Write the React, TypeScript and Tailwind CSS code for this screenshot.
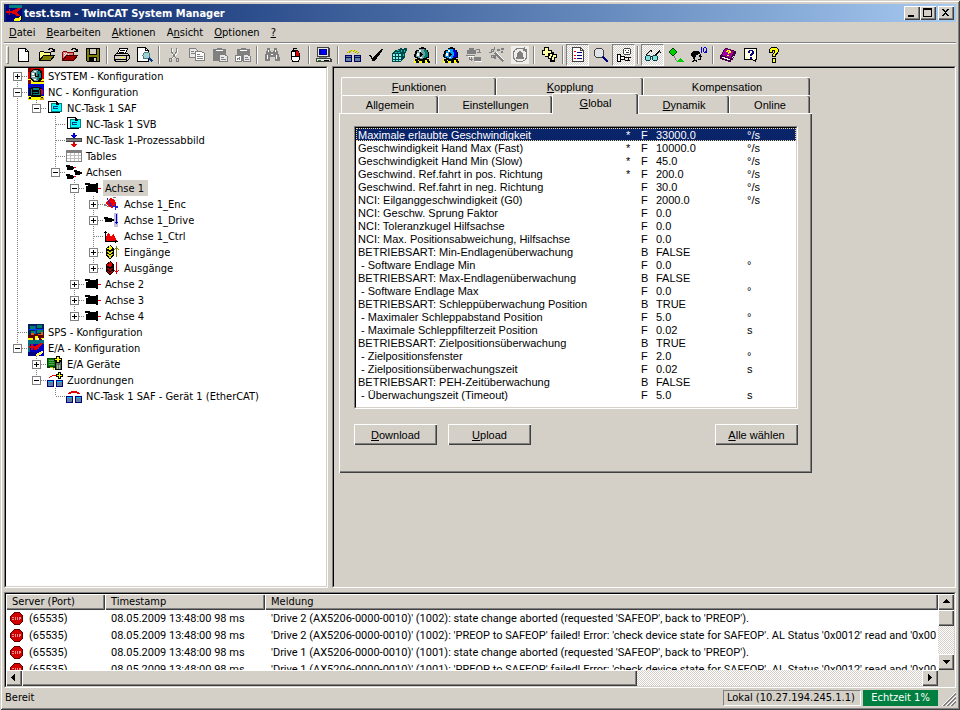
import { Fragment, ReactNode } from 'react';

const raised = 'bg-[#d4d0c8] shadow-[inset_1px_1px_#fff,inset_-1px_-1px_#404040,inset_-2px_-2px_#808080]';
const sunkenOuter = 'border border-t-[#808080] border-l-[#808080] border-r-white border-b-white';
const sunkenInner = 'border border-t-black border-l-black border-r-[#d4d0c8] border-b-[#d4d0c8]';
const checker = 'bg-[conic-gradient(#fff_25%,#d4d0c8_0_50%,#fff_0_75%,#d4d0c8_0)] bg-[length:2px_2px]';

/* ---------- Icons ---------- */

function Svg({ children, w = 16, h = 16 }: { children: ReactNode; w?: number; h?: number }) {
  return (
    <svg width={w} height={h} viewBox={`0 0 ${w} ${h}`} shapeRendering="crispEdges" fill="none" className="block shrink-0" aria-hidden="true">
      {children}
    </svg>
  );
}

const treeIcons: Record<string, ReactNode> = {
  system: (
    <Svg>
      <rect width="16" height="16" fill="#e00000" />
      <path d="M0 11h16v5H0z" fill="#ffff00" />
      <path d="M0 0h3v4H0zM0 12h3v4H0zM12 13h4v1h-4z" fill="#800000" />
      <path d="M5 1h6l3 3v7l-3 3H5l-3-3V4z" fill="#000" />
      <path d="M5 2h4l2 2v7l-2 2H6l-3-3V5z" fill="#7f9f9f" />
      <path d="M9 3h3v2h1v5h-2v2H9z" fill="#008080" />
      <path d="M4 5h2v2H4zM4 8h3v1H4zM6 3h2v1H6zM6 11h2v1H6z" fill="#fff" />
      <path d="M7 5h1v3h2v1H7zM10 6h1v3h-1z" fill="#000" />
    </Svg>
  ),
  nc: (
    <Svg>
      <rect width="16" height="16" fill="#0000e0" />
      <path d="M0 12h16v4H0z" fill="#ffff00" />
      <path d="M0 14h3v1H0zM12 14h4v2h-4z" fill="#d4a000" />
      <path d="M1 4h2V3h9v1h2v8h-1v1H3v-1H1z" fill="#000" />
      <path d="M5 4h6v2H5zM5 8h5v1H5zM5 10h6v1H5z" fill="#008080" />
      <path d="M3 5h1v6H3zM11 6h1v5h-1z" fill="#008080" />
      <path d="M5 1h7v1h1v2h-1V2H5z" fill="#000080" />
      <path d="M12 5h2v1h1v4h-1v1h-1V6h-1z" fill="#e00000" />
      <path d="M1 13h2v2H1zM13 13h2v1h-2z" fill="#000" />
    </Svg>
  ),
  task: (
    <Svg>
      <path d="M1.500 1.500h8l3 3v8h-11z" fill="#fff" stroke="#000" />
      <path d="M4 4h10v8H4z" fill="#00ffff" />
      <path d="M4.500 3.500h10v8h-10z" stroke="#008080" />
      <path d="M6 6.500h5M6 8.500h5M6.500 6v3" stroke="#004080" />
      <path d="M9 1h1v1h1v1h1v2H9z" fill="#000" />
    </Svg>
  ),
  image: (
    <Svg>
      <path d="M0 6h16v4H0z" fill="#404040" />
      <path d="M0 7h15v2H0z" fill="#808080" />
      <path d="M7 1h2v2h2v1h-1v1H9v1H7V5H6V4H5V3h2z" fill="#0000d0" />
      <path d="M7 10h2v2h2v1h-1v1H9v1H7v-1H6v-1H5v-1h2z" fill="#e00000" />
    </Svg>
  ),
  tables: (
    <Svg>
      <path d="M.5 2.500h15v11H.5z" fill="#fff" stroke="#808080" />
      <path d="M1 3h14v2H1z" fill="#808080" />
      <path d="M1 7.500h14M1 10.500h14M4.500 5v8M8.500 5v8M12.500 5v8" stroke="#c0c0c0" />
    </Svg>
  ),
  axes: (
    <Svg>
      <path d="M0 1h4v1h3v1h1v2H7v1H1V3H0zM8 6h3v1h3v1h2v2h-2v1H9V8H8zM0 10h4v1h3v1h1v2H7v1H1v-3H0z" fill="#000" />
      <path d="M8 3h2v1H8zM8 12h2v1H8z" fill="#e00000" />
    </Svg>
  ),
  axis: (
    <Svg>
      <path d="M0 3h5v1h6V3h2v10h-2v-1H1V6h2V5H0z" fill="#000" />
      <path d="M13 8h3v1h-3z" fill="#e00000" />
    </Svg>
  ),
  enc: (
    <Svg>
      <path d="M6 2h2v1h2v1h1v2h1v2h-1v2h-1v1H9v1H7v-1H5v-1H4V9H3V8H2V6h1V5h1V4h1V3h1z" fill="#f00000" />
      <path d="M0 8h2v1h1v1h2v1H3v-1H0zM9 1h3v1H9z" fill="#808080" />
      <path d="M3 2h1v2h1v2h1v1h1v2h1v1h3v1H8v-1H6V8H5V6H4V4H3zM11 8h1v2h2v2h-2v2h-1z" fill="#2020d0" />
    </Svg>
  ),
  drive: (
    <Svg>
      <path d="M0 5h4v1h4v1h2v2H8v1H1V7H0z" fill="#000" />
      <path d="M10 1h4v14h-4z" fill="#c0c0e0" />
      <path d="M12.500 2v10M11 10.500h3M12 11.500h1" stroke="#0000d0" />
    </Svg>
  ),
  ctrl: (
    <Svg>
      <path d="M2 14V8h1V6h1V5h1v1h1v2h2V7h1V6h1v2h1v2h1v2h1v2z" fill="#f00000" />
      <path d="M1.500 3v10.500H14M0 4.500h3M11.500 12v3" stroke="#000" />
    </Svg>
  ),
  inputs: (
    <Svg>
      <path d="M6 1h1v1h1v1h1v1h1v8H9v1H8v1H7v1H5v-1H4v-1H3v-1H2V4h1V3h1V2h2z" fill="#000" />
      <path d="M5 2h2v1h1v2H7v1H5V5H3V4h2z" fill="#ffff00" />
      <path d="M3 7h2v1h2V7h2v1H8v1H7v1H5V9H4V8H3zM3 10h2v1h2v-1h2v1H8v1H7v2H5v-2H4v-1H3z" fill="#e0e000" />
      <path d="M12.500 2v11M11 4.500h3M10 5.500h1M14 5.500h1" stroke="#808000" />
    </Svg>
  ),
  outputs: (
    <Svg>
      <path d="M6 1h1v1h1v1h1v1h1v8H9v1H8v1H7v1H5v-1H4v-1H3v-1H2V4h1V3h1V2h2z" fill="#000" />
      <path d="M5 2h2v1h1v3H7v1H5V6H3V4h2z" fill="#e00000" />
      <path d="M3 8h2v1h2V8h2v1H8v1H7v1H5v-1H4V9H3zM3 11h2v1h2v-1h2v1H8v1H7v1H5v-1H4v-1H3z" fill="#a00000" />
      <path d="M12.500 2v12M11 11.500h3M10 10.500h1M14 10.500h1" stroke="#e00000" />
    </Svg>
  ),
  sps: (
    <Svg>
      <rect width="16" height="14" fill="#002060" />
      <path d="M2 2h5v3H2zM9 1h5v3H9zM3 7h4v3H3zM9 6h6v3H9z" fill="#008060" />
      <path d="M1 5h14v1H1zM7 2h1v9H7z" fill="#0040ff" />
      <path d="M0 11h4v-1h7v1h5v3h-2v2h-3v-2H7v2H0z" fill="#600000" />
      <path d="M3 9h3v2H3zM10 10h3v1h-3zM13 8h2v3h-2z" fill="#e06000" />
      <path d="M0 14h5v2H0zM7 12h3v2H9v2H7zM13 14h3v1h-3z" fill="#ffff00" />
    </Svg>
  ),
  io: (
    <Svg>
      <rect width="16" height="16" fill="#0000c0" />
      <path d="M0 0h16v4H0zM0 4h2v9H0zM7 6h4v3H7z" fill="#007080" />
      <path d="M1 6h2V4h2v2h3V5h2V4h2V3h3v1h-1v1h-1v1h-1v1h-1v1h-1v1H9v1H6V8H5v2H3V8H1z" fill="#e00000" />
      <path d="M0 12h8v4H0z" fill="#000080" />
      <path d="M9 13h2v-1h2v-1h2v2h-1v1h-1v1h-2v1H8v-2h1z" fill="#ffff60" />
    </Svg>
  ),
  devices: (
    <Svg>
      <path d="M0 2h15v10H0z" fill="#004000" />
      <path d="M1 3h13v7H1z" fill="#008000" />
      <path d="M2 4h5v1H2zM2 6h5v1H2zM2 8h5v1H2z" fill="#60a060" />
      <path d="M6 12h1v2H6zM8 12h1v2H8zM3 11h3v1H3z" fill="#c0c000" />
      <path d="M8.500 5.500h6v8h-6z" fill="#607060" stroke="#000" />
      <path d="M10 9h1v4h-1zM12 9h1v4h-1z" fill="#a0c0a0" />
      <path d="M9 0h4v2h2v3h-2v2H9V5H7V2h2z" fill="#000" />
      <path d="M10 1h2v2h2v1h-2v2h-2V4H8V3h2z" fill="#ffff00" />
    </Svg>
  ),
  mappings: (
    <Svg>
      <path d="M2 5h1V4h2V3h4v1H5v1H3v1H2z" fill="#e00000" />
      <path d="M0 8h7v7H0zM9 8h7v7H9z" fill="#000080" />
      <path d="M1 9h5v1H1zM10 9h5v1h-5z" fill="#00c0ff" />
      <path d="M1 10h5v4H1zM10 10h5v4h-5z" fill="#6080a0" />
      <path d="M11 0h3v2h2v3h-2v2h-3V5H9V2h2z" fill="#000" />
      <path d="M12 1h1v2h2v1h-2v2h-1V4h-2V3h2z" fill="#ffff00" />
    </Svg>
  ),
  mapping: (
    <Svg>
      <path d="M2 5h1V4h2V3h6v1h2v1h1v1h-3V5H5v1H2z" fill="#e00000" />
      <path d="M0 8h7v7H0zM9 8h7v7H9z" fill="#000080" />
      <path d="M1 9h5v1H1zM10 9h5v1h-5z" fill="#00c0ff" />
      <path d="M1 10h5v4H1zM10 10h5v4h-5z" fill="#6080a0" />
    </Svg>
  ),
};

const gear = (light: string, dark: string) => (
  <Svg>
    <path d="M0 12h16v4H0z" fill="#ffff00" />
    <path d="M2 12h2v2h1v2H2v-2H1v-2zM8 14h3v2H8zM13 12h2v2h1v2h-2v-1h-1z" fill="#000" />
    <path d="M5 1h2V0h3v1h2v2h2v2h1v6h-2v2h-2v1H5v-1H3v-2H1v-1H0V7h1V4h1V3h3z" fill="#000" />
    <path d="M5 2h5v1h1v8H9v1H6v-1H4v-1H2V7h1V4h2z" fill={light} />
    <path d="M10 2h1v1h2v2h1v5h-2v1h-2V9h1V5h-1z" fill={dark} />
    <path d="M3 6h2v3H3zM5 3h2v2H5zM6 10h2v1H6z" fill="#fff" />
    <path d="M6 5h1v1h1v1h1v1H8v1H7v1H6z" fill="#000" />
  </Svg>
);

const tools: Record<string, ReactNode> = {
  new: (
    <Svg>
      <path d="M2.500 1.500h7l3 3v10h-10z" fill="#fff" stroke="#000" />
      <path d="M9.500 1.500v3h3" stroke="#000" />
    </Svg>
  ),
  open: (
    <Svg>
      <path d="M.5 13V5.500l1-1h3l1 1h6v3" fill="#ffff80" stroke="#000" />
      <path d="M.5 13.500l4-5h11l-4 5z" fill="#808000" stroke="#000" />
      <path d="M9 2.500h1v-1h3v1h1v2M12 4.500h4M15.500 2v3" stroke="#000" />
    </Svg>
  ),
  openRed: (
    <Svg>
      <path d="M.5 13V5.500l1-1h3l1 1h6v3" fill="#e08080" stroke="#800000" />
      <path d="M2 6h1v1H2zM4 6h1v1H4zM3 7h1v1H3zM6 7h1v1H6zM2 8h1v1H2z" fill="#fff" />
      <path d="M.5 13.500l4-5h11l-4 5z" fill="#a00000" stroke="#400000" />
      <path d="M9 2.500h1v-1h3v1h1v2M12 4.500h4M15.500 2v3" stroke="#000" />
    </Svg>
  ),
  save: (
    <Svg>
      <path d="M1.500 1.500h13v13h-12l-1-1z" fill="#808000" stroke="#000" />
      <path d="M4 1h8v7H4z" fill="#000" />
      <path d="M5 2h6v5H5z" fill="#d4d0c8" />
      <path d="M4 10h8v5H4z" fill="#000" />
      <path d="M9 11h2v3H9z" fill="#d4d0c8" />
    </Svg>
  ),
  print: (
    <Svg>
      <path d="M3.500 6.500l2-5h8l-2 5" fill="#fff" stroke="#000" />
      <path d="M6 3.500h5M5 5.500h5" stroke="#000" />
      <path d="M.5 8.500l2-2h11l2 2v3l-3 3H1.500l-1-2z" fill="#d4d0c8" stroke="#000" />
      <path d="M1 8.500h11.500v5M12.500 9.500l3-2M1 12.500h11" stroke="#000" />
      <path d="M7 10h3v1H7z" fill="#ffff00" />
    </Svg>
  ),
  preview: (
    <Svg>
      <path d="M.5.5h8l3 3v11H.5z" fill="#fff" stroke="#000" />
      <path d="M8.500.5v3h3" stroke="#000" />
      <circle cx="9.500" cy="8.500" r="3.500" fill="#a0d0d0" stroke="#408080" />
      <path d="M12 11l3.500 3.500" stroke="#004080" strokeWidth="2" />
    </Svg>
  ),
  cut: (
    <Svg>
      <path d="M6 2v4l2 3 3 3M11 2v4L9 9l-3 3" stroke="#fff" />
      <path d="M5.500 1v4l3 4 2 3M10.500 1v4l-3 4-2 3" stroke="#808080" />
      <path d="M3.500 11.500h2v3h-2zM10.500 11.500h2v3h-2z" stroke="#808080" />
    </Svg>
  ),
  copy: (
    <Svg>
      <path d="M.5 1.500h6l2 2v7h-8z" fill="#e8e8e8" stroke="#808080" />
      <path d="M6.500 4.500h6l3 2v7h-9z" fill="#fff" stroke="#808080" />
      <path d="M2 4.500h3M2 6.500h4M8 7.500h3M8 9.500h6M8 11.500h6" stroke="#808080" />
    </Svg>
  ),
  paste: (
    <Svg>
      <path d="M1 2h4V1h5v1h4v12H1z" fill="#808080" />
      <path d="M4 3h7v1H4z" fill="#fff" />
      <path d="M7.500 7.500h5l3 2v5h-8z" fill="#e8e8e8" stroke="#808080" />
      <path d="M9 10.500h3M9 12.500h5" stroke="#808080" />
    </Svg>
  ),
  pasteLink: (
    <Svg>
      <path d="M2 2h4V1h5v1h4v12H2z" fill="#808080" />
      <path d="M5 3h7v1H5z" fill="#fff" />
      <path d="M8.500 7.500h4l3 2v5h-7z" fill="#e8e8e8" stroke="#808080" />
      <path d="M.5 8.500h6v6h-6z" fill="#fff" stroke="#808080" />
      <path d="M2.500 13v-2h2M4.500 10v3M10 10.500h3M10 12.500h4" stroke="#808080" />
    </Svg>
  ),
  find: (
    <Svg>
      <path d="M3 1h3v3h1v1h2V4h1V1h3v3h1v3h1v3h1v4h-5v-4H6v4H1v-4h0V7h1V4h1z" fill="#808080" />
      <path d="M3 8h1v4H3zM12 8h1v4h-1zM4 3h1v2H4zM11 3h1v2h-1zM7 7h2v1H7z" fill="#fff" />
    </Svg>
  ),
  mouse: (
    <Svg>
      <path d="M6.500 4V1.500h3" stroke="#000" />
      <path d="M5 3h6v1h1v2h1v7h-1v2H5v-2H4V6h0V4h1z" fill="#000" />
      <path d="M5 5h3v4H5zM5 10h7v3h-1v1H6v-1H5z" fill="#fff" />
      <path d="M9 4h2v1h1v4H9z" fill="#e00000" />
    </Svg>
  ),
  pc: (
    <Svg>
      <path d="M1.500.5h11v9h-11z" fill="#e8e8e8" stroke="#404040" />
      <path d="M12 1h2v9h-2zM15 12h1v3h-1z" fill="#404040" />
      <path d="M3 2h8v6H3z" fill="#000080" />
      <path d="M5 3h5v4H5z" fill="#0000ff" />
      <path d="M.5 11.500h14v3H.5z" fill="#e8e8e8" stroke="#404040" />
      <path d="M3 10h8v1H3z" fill="#808080" />
      <path d="M2 13.500h3" stroke="#008000" />
      <path d="M8 13.500h5" stroke="#000" />
    </Svg>
  ),
  links: (
    <Svg>
      <path d="M2 5h1V4h2V3h6v1h2v1h1v1h-2V5h-2V4H5v1H4v1H2z" fill="#e8e800" stroke="#a0a000" strokeWidth="1" strokeDasharray="1 2" />
      <path d="M0 8h7v7H0zM9 8h7v7H9z" fill="#000060" />
      <path d="M1 9h5v1H1zM10 9h5v1h-5zM1 11h5v3H1zM10 11h5v3h-5z" fill="#6080a0" />
    </Svg>
  ),
  check: (
    <Svg>
      <path d="M1 8h2v1h1v2h1v-1h1V9h1V8h1V7h1V6h1V5h1V4h1V3h1V2h2v1h-1v2h-1v1h-1v2h-1v1h-1v1H9v2H8v1H7v1H4v-2H3v-2H2V9H1z" fill="#000" />
    </Svg>
  ),
  cubes: (
    <Svg>
      <path d="M1 6h1V5h1V4h1V3h3V2h2V1h2v1h2V1h3v3h-1v2h-1v5h-1v1h-1v1h-1v1h-1v1H1z" fill="#004848" />
      <path d="M2 7h2v2H2zM5 7h2v2H5zM8 7h2v2H8zM2 10h2v2H2zM5 10h2v2H5zM8 10h2v2H8zM2 13h2v1H2zM5 13h2v1H5zM8 13h2v1H8z" fill="#80f0f0" />
      <path d="M4 5h2v1H4zM7 5h2v1H7zM6 3h2v1H6zM10 3h1v2h-1zM13 3h1v2h-1zM12 7h1v2h-1z" fill="#00c0c0" />
    </Svg>
  ),
  gearGreen: gear('#70a0a0', '#008070'),
  gearBlue: gear('#00a0ff', '#0000e0'),
  restart: (
    <Svg>
      <path d="M1 3h2V1h5v2h2v4H1zM8 10h7v4H8zM0 8h9v1H0z" fill="#808080" />
      <path d="M10 2.500h3v3M11 5.500h4M3.500 9v3.500h3M5.500 10v4" stroke="#808080" />
      <path d="M2 9.500h6M9 14.500h7" stroke="#fff" />
    </Svg>
  ),
  wand: (
    <Svg>
      <path d="M7 6l8 8" stroke="#fff" strokeWidth="2" />
      <path d="M6 6l8.500 8.500" stroke="#808080" strokeWidth="2" />
      <path d="M5.500 0v3M0 5.500h3M2 2h2v2H2zM8 2h2v1H8zM2 8h2v2H2zM5 8h1v3H5zM12 1h2v1h-2zM12 4h1v1h-1z" stroke="#808080" />
    </Svg>
  ),
  reload: (
    <Svg w={18} h={18}>
      <rect width="18" height="18" fill="#f0eeea" />
      <circle cx="9" cy="9" r="7" stroke="#808080" />
      <path d="M5 13v-2h1V7h1V6h1V5h2v1h1v1h1v4h1v2zM13 1h1v2h2v2h-4V4h1z" fill="#808080" />
    </Svg>
  ),
  plus: (
    <Svg>
      <path d="M3 0h5v3h3v2h2v2h3v4h-2v4h-5v-3H7v-2H4V8H1V3h2z" fill="#000" />
      <path d="M4 1h3v3h3v2H7v3H4V7H2V4h2z" fill="#ffffa0" />
      <path d="M9 7h2v2h-1v2H8V9h1zM12 8h3v2h-2v3h-2v-3h1z" fill="#ffffa0" />
    </Svg>
  ),
  props: (
    <Svg>
      <path d="M2.500.5h8l3 3v11h-11z" fill="#fff" stroke="#404040" />
      <path d="M10.500.5v3h3" stroke="#404040" />
      <path d="M4 4.500h2M4 8.500h2M4 11.500h2" stroke="#e00000" />
      <path d="M7 5.500h5M7 8.500h5M7 11.500h5" stroke="#000080" />
    </Svg>
  ),
  zoom: (
    <Svg>
      <circle cx="6" cy="6" r="5" fill="#e0e4e8" stroke="#404040" />
      <path d="M10 10l5 5" stroke="#000080" strokeWidth="2" />
    </Svg>
  ),
  monitor: (
    <Svg>
      <path d="M8 1h6v1h1v5h-1v1H8V7H7V2h1z" fill="#404040" />
      <path d="M8 2h6v5H8z" fill="#fff" />
      <path d="M9 3h1v1H9zM12 3h1v1h-1zM10 5h3v1h-3z" fill="#404040" />
      <path d="M1.500 7.500h3v7h-3zM4.500 9.500h4v3h-4z" fill="#fff" stroke="#000" />
      <path d="M8 10.500h7M12.500 10v3M9 13.500h5" stroke="#000" />
    </Svg>
  ),
  glasses: (
    <Svg>
      <path d="M1 8h4v1h1v4H5v1H1v-1H0V9h1zM8 8h4v1h1v4h-1v1H8v-1H7V9h1z" fill="#004040" />
      <path d="M1 9h4v4H1zM8 9h4v4H8z" fill="#80e0e0" />
      <path d="M1 7h1V6h1V5h1V4h1V3h2v2H6V4H5v1H4v1H3v1H2v1H1zM10 7h1V6h1V5h1V4h1V3h1v2h1v1h-1V5h-1v1h-1v1h-1v1h-2zM6 9h1v1H6z" fill="#000" />
    </Svg>
  ),
  diamond: (
    <Svg>
      <path d="M4 1h2v1h1v1h1v1h1v2H8v1H7v1H6v1H4V8H3V7H2V6H1V4h1V3h1V2h1z" fill="#004000" />
      <path d="M4 2h2v1h1v1h1v2H7v1H6v1H4V7H3V6H2V4h1V3h1z" fill="#00d000" />
      <path d="M6 9h1v2H6zM7 11h1v2H7zM8 13h1v1H8z" fill="#808080" />
      <path d="M9 15v-1h1v-1h1v-1h1v-1h1v1h1v1h1v1h1v1z" fill="#00d000" />
    </Svg>
  ),
  iq: (
    <Svg>
      <path d="M2 4h6v1h1v2H7v1H5v2H4v2H2v-2H1V9H0V6h1V5h1z" fill="#000" />
      <path d="M9 7h1v2h1v1h-1v3H7v-1h2v-2H8V8h1zM3 12h1v1h2v2H5v-1H3v1H1v-1h1v-1h1z" fill="#000" />
      <path d="M5 8h3v2h1v2H6v1H4v-3h1z" fill="#c8c8c8" />
      <path d="M10 0h1v6h-1zM12 1h1v4h-1zM13 0h2v1h-2zM15 1h1v5h-1zM13 5h2v1h-2zM14 4h1v1h-1z" fill="#0000d0" />
    </Svg>
  ),
  book: (
    <Svg>
      <path d="M5 1h3v1h3v1h3v1h2v3h-1v2h-1v2h-1v2h-2v2H8v-1H5v-1H2v-1H0V8h1V7h1V5h1V3h1V2h1z" fill="#400040" />
      <path d="M5 2h3v1h3v1h3v1h-1v2h-1v2h-1v2H9v-1H6V9H3V8H2V7h1V5h1V3h1z" fill="#a000a0" />
      <path d="M2 10h3v1h3v1h2v1H7v-1H4v-1H2zM13 9h1v1h-1v1h-1v-1h1z" fill="#fff" />
      <path d="M6 4h1V3h3v1h1v2H9v1H8V5h1V4H8v1H6zM7 8h2v1H7z" fill="#ffff00" />
    </Svg>
  ),
  helpTopics: (
    <Svg>
      <path d="M1.500 1.500h12v11h-1v2l-3-2h-8z" fill="#ffffe0" stroke="#000" />
      <path d="M5 4h1V3h4v1h1v3h-1v1H9v1H7V7h1V6h1V4H7v2H5zM7 10h2v2H7z" fill="#000080" />
    </Svg>
  ),
  help: (
    <Svg>
      <path d="M4 1h1V0h6v1h1v1h1v3h-1v2h-1v1h-1v2H6V7h1V6h1V4H7v2H3V2h1zM6 11h4v5H6z" fill="#000" />
      <path d="M5 1h6v1h1v3h-1v1h-1v1H9v2H7V7h1V6h1V3H6v2H4V2h1zM7 12h2v3H7z" fill="#ffff00" />
    </Svg>
  ),
};

/* ---------- Title, menu and toolbar ---------- */

function Hot({ text, at }: { text: string; at?: number }) {
  if (at === undefined) return <>{text}</>;
  return (
    <>
      {text.slice(0, at)}
      <span className="underline underline-offset-1">{text[at]}</span>
      {text.slice(at + 1)}
    </>
  );
}

function TitleBar() {
  return (
    <header className="flex h-[18px] shrink-0 items-center bg-gradient-to-r from-[#0a246a] to-[#a6caf0] px-[2px]">
      <Svg>
        <rect width="16" height="16" fill="#000080" />
        <path d="M3 0h13v3H3z" fill="#008080" />
        <path d="M0 6h3V4h1v2h3V5h2V4h2V3h4v1h-1v1h-1v1h-1v1h-1v1h1v1h1v1h1v1h-4v-1H9V9H6V8H4v2H3V8H0z" fill="#e00000" />
        <path d="M9 13h3l3-2v3l-2 2H8z" fill="#ffff00" />
      </Svg>
      <h1 className="ml-[2px] flex-1 whitespace-nowrap pt-px font-bold text-white">test.tsm - TwinCAT System Manager</h1>
      <button aria-label="Minimieren" className={`h-[14px] w-4 ${raised}`}>
        <Svg h={14}><path d="M4 9h6v2H4z" fill="#000" /></Svg>
      </button>
      <button aria-label="Maximieren" className={`h-[14px] w-4 ${raised}`}>
        <Svg h={14}><path d="M3.500 2.500h8v8h-8zM3 3.500h9" stroke="#000" /></Svg>
      </button>
      <button aria-label="Schließen" className={`ml-[2px] h-[14px] w-4 ${raised}`}>
        <Svg h={14}><path d="M4 3h2v1h1v1h1V4h1V3h2v1h-1v1H9v1H8v1h1v1h1v1h1v1H9V9H8V8H7v1H6v1H4V9h1V8h1V7h1V6H6V5H5V4H4z" fill="#000" /></Svg>
      </button>
    </header>
  );
}

const menus = [
  { label: 'Datei', hot: 0 },
  { label: 'Bearbeiten', hot: 0 },
  { label: 'Aktionen', hot: 0 },
  { label: 'Ansicht', hot: 1 },
  { label: 'Optionen', hot: 0 },
  { label: '?', hot: 0 },
];

// groups are divided by an etched line
const toolGroups: { id: string; label: string; pressed?: boolean }[][] = [
  [{ id: 'new', label: 'Neu' }, { id: 'open', label: 'Öffnen' }, { id: 'openRed', label: 'Vom Ziel öffnen' }, { id: 'save', label: 'Speichern' }],
  [{ id: 'print', label: 'Drucken' }, { id: 'preview', label: 'Seitenansicht' }],
  [{ id: 'cut', label: 'Ausschneiden' }, { id: 'copy', label: 'Kopieren' }, { id: 'paste', label: 'Einfügen' }, { id: 'pasteLink', label: 'Mit Verknüpfung einfügen' }],
  [{ id: 'find', label: 'Suchen' }, { id: 'mouse', label: 'Gerätesuche' }],
  [{ id: 'pc', label: 'Zielsystem' }],
  [{ id: 'links', label: 'Mappings erzeugen' }, { id: 'check', label: 'Prüfen' }, { id: 'cubes', label: 'Aktivieren' }, { id: 'gearGreen', label: 'Run-Modus' }],
  [{ id: 'gearBlue', label: 'Config-Modus' }, { id: 'restart', label: 'Geräte neu laden' }, { id: 'wand', label: 'Scannen' }, { id: 'reload', label: 'Free Run' }],
  [{ id: 'plus', label: 'Hinzufügen' }],
  [{ id: 'props', label: 'Eigenschaften', pressed: true }, { id: 'zoom', label: 'Vergrößern' }, { id: 'monitor', label: 'Beobachten', pressed: true }],
  [{ id: 'glasses', label: 'Online-Werte', pressed: true }, { id: 'diamond', label: 'Variablen' }, { id: 'iq', label: 'Assistent' }],
  [{ id: 'book', label: 'Handbuch' }, { id: 'helpTopics', label: 'Hilfethemen' }, { id: 'help', label: 'Hilfe' }],
];

function Toolbar() {
  return (
    <div role="toolbar" className="flex h-[24px] shrink-0 items-center border-t border-[#808080] shadow-[inset_0_1px_#fff]">
      <div className="mr-[3px] ml-[2px] h-[18px] w-[3px] border border-white border-r-[#808080] border-b-[#808080]"></div>
      {toolGroups.map((group, i) => (
        <Fragment key={i}>
          {i > 0 && <div className="mx-[2px] h-[18px] w-[2px] border-l border-[#808080] bg-white"></div>}
          {group.map((tool) => (
            <button
              key={tool.id}
              aria-label={tool.label}
              className={`flex h-[22px] w-[23px] items-center justify-center ${
                tool.pressed ? `border border-[#808080] border-r-white border-b-white ${checker}` : ''
              }`}
            >
              {tools[tool.id]}
            </button>
          ))}
        </Fragment>
      ))}
    </div>
  );
}

/* ---------- Tree ---------- */

interface TreeNode {
  label: string;
  icon: string;
  expandable?: boolean;
  selected?: boolean;
  children?: TreeNode[];
}

const tree: TreeNode[] = [
  { label: 'SYSTEM - Konfiguration', icon: 'system', expandable: true },
  {
    label: 'NC - Konfiguration',
    icon: 'nc',
    children: [
      {
        label: 'NC-Task 1 SAF',
        icon: 'task',
        children: [
          { label: 'NC-Task 1 SVB', icon: 'task' },
          { label: 'NC-Task 1-Prozessabbild', icon: 'image' },
          { label: 'Tables', icon: 'tables' },
          {
            label: 'Achsen',
            icon: 'axes',
            children: [
              {
                label: 'Achse 1',
                icon: 'axis',
                selected: true,
                children: [
                  { label: 'Achse 1_Enc', icon: 'enc', expandable: true },
                  { label: 'Achse 1_Drive', icon: 'drive', expandable: true },
                  { label: 'Achse 1_Ctrl', icon: 'ctrl' },
                  { label: 'Eingänge', icon: 'inputs', expandable: true },
                  { label: 'Ausgänge', icon: 'outputs', expandable: true },
                ],
              },
              { label: 'Achse 2', icon: 'axis', expandable: true },
              { label: 'Achse 3', icon: 'axis', expandable: true },
              { label: 'Achse 4', icon: 'axis', expandable: true },
            ],
          },
        ],
      },
    ],
  },
  { label: 'SPS - Konfiguration', icon: 'sps' },
  {
    label: 'E/A - Konfiguration',
    icon: 'io',
    children: [
      { label: 'E/A Geräte', icon: 'devices', expandable: true },
      {
        label: 'Zuordnungen',
        icon: 'mappings',
        children: [{ label: 'NC-Task 1 SAF - Gerät 1 (EtherCAT)', icon: 'mapping' }],
      },
    ],
  },
];

function Branches({ nodes, trail }: { nodes: TreeNode[]; trail: boolean[] }) {
  return (
    <ul role={trail.length ? 'group' : 'tree'}>
      {nodes.map((node, i) => {
        const last = i === nodes.length - 1;
        const top = trail.length === 0 && i === 0 ? 8 : 0;
        const boxed = node.expandable || node.children;

        return (
          <li key={node.label} role="treeitem" aria-selected={!!node.selected}>
            <div className="flex h-4 items-center">
              {trail.map((line, n) => (
                <Svg key={n} w={19}>
                  {line && <path d="M9.500 0v16" stroke="#808080" strokeDasharray="1 1" />}
                </Svg>
              ))}
              <Svg w={19}>
                <path d={`M9.500 ${top}V${last ? 8 : 16}M10 8.500h9`} stroke="#808080" strokeDasharray="1 1" />
                {boxed && <path d="M5.500 4.500h8v8h-8z" fill="#fff" stroke="#808080" />}
                {boxed && <path d={node.children ? 'M7 8.500h5' : 'M7 8.500h5M9.500 6v5'} stroke="#000" />}
              </Svg>
              <div className="ml-px">{treeIcons[node.icon]}</div>
              <span className={`ml-[2px] h-4 whitespace-nowrap pl-[2px] leading-[18px] ${node.selected ? 'bg-[#d4d0c8] pr-1' : ''}`}>
                {node.label}
              </span>
            </div>
            {node.children && <Branches nodes={node.children} trail={[...trail, !last]} />}
          </li>
        );
      })}
    </ul>
  );
}

/* ---------- Parameter page ---------- */

const tabsBack = [
  { label: 'Funktionen', hot: 0, width: 'w-[155px]' },
  { label: 'Kopplung', hot: 0, width: 'w-[147px]' },
  { label: 'Kompensation', width: 'w-[167px]' },
];

const tabsFront = [
  { label: 'Allgemein', width: 'w-[97px]' },
  { label: 'Einstellungen', width: 'w-[114px]' },
  { label: 'Global', hot: 0, width: 'w-[86px]', active: true },
  { label: 'Dynamik', hot: 0, width: 'w-[91px]' },
  { label: 'Online', width: 'w-[81px]' },
];

const params = [
  ['Maximale erlaubte Geschwindigkeit', '*', 'F', '33000.0', '°/s'],
  ['Geschwindigkeit Hand Max (Fast)', '*', 'F', '10000.0', '°/s'],
  ['Geschwindigkeit Hand Min (Slow)', '*', 'F', '45.0', '°/s'],
  ['Geschwind. Ref.fahrt in pos. Richtung', '*', 'F', '200.0', '°/s'],
  ['Geschwind. Ref.fahrt in neg. Richtung', '', 'F', '30.0', '°/s'],
  ['NCI: Eilganggeschwindigkeit (G0)', '', 'F', '2000.0', '°/s'],
  ['NCI: Geschw. Sprung Faktor', '', 'F', '0.0', ''],
  ['NCI: Toleranzkugel Hilfsachse', '', 'F', '0.0', ''],
  ['NCI: Max. Positionsabweichung, Hilfsachse', '', 'F', '0.0', ''],
  ['BETRIEBSART: Min-Endlagenüberwachung', '', 'B', 'FALSE', ''],
  [' - Software Endlage Min', '', 'F', '0.0', '°'],
  ['BETRIEBSART: Max-Endlagenüberwachung', '', 'B', 'FALSE', ''],
  [' - Software Endlage Max', '', 'F', '0.0', '°'],
  ['BETRIEBSART: Schleppüberwachung Position', '', 'B', 'TRUE', ''],
  [' - Maximaler Schleppabstand Position', '', 'F', '5.0', '°'],
  [' - Maximale Schleppfilterzeit Position', '', 'F', '0.02', 's'],
  ['BETRIEBSART: Zielpositionsüberwachung', '', 'B', 'TRUE', ''],
  [' - Zielpositionsfenster', '', 'F', '2.0', '°'],
  [' - Zielpositionsüberwachungszeit', '', 'F', '0.02', 's'],
  ['BETRIEBSART: PEH-Zeitüberwachung', '', 'B', 'FALSE', ''],
  [' - Überwachungszeit (Timeout)', '', 'F', '5.0', 's'],
];

function Tab({ label, hot, width, active }: { label: string; hot?: number; width: string; active?: boolean }) {
  return (
    <button
      role="tab"
      aria-selected={!!active}
      className={`rounded-t-[2px] border-t border-l border-white bg-[#d4d0c8] shadow-[inset_-1px_0_#404040,inset_-2px_0_#808080] ${width} ${
        active ? 'z-10 -mt-[2px] -mb-px h-[21px] pb-[2px]' : 'h-[18px]'
      }`}
    >
      <Hot text={label} at={hot} />
    </button>
  );
}

function PushButton({ label }: { label: string }) {
  return (
    <button className={`h-[21px] w-[83px] ${raised}`}>
      <Hot text={label} at={0} />
    </button>
  );
}

function ParameterPage() {
  return (
    <div className="w-[473px] font-['Liberation_Sans',Arial,sans-serif]">
      <div role="tablist" className="px-[2px]">
        <div className="flex">
          {tabsBack.map((tab) => <Tab key={tab.label} {...tab} />)}
        </div>
        <div className="flex">
          {tabsFront.map((tab) => <Tab key={tab.label} {...tab} />)}
        </div>
      </div>
      <div className="border-t border-l border-white shadow-[inset_-1px_-1px_#404040,inset_-2px_-2px_#808080]">
        <div className="pt-3 pr-[14px] pb-7 pl-[14px]">
          <div className={sunkenOuter}>
            <div className={`h-[281px] bg-white ${sunkenInner}`}>
              <table className="w-full table-fixed border-collapse">
                <colgroup>
                  <col className="w-[268px]" />
                  <col className="w-[15px]" />
                  <col className="w-[15px]" />
                  <col className="w-[91px]" />
                  <col />
                </colgroup>
                <tbody>
                  {params.map((row, i) => (
                    <tr key={row[0]} className={i === 0 ? 'bg-[#0a246a] text-white outline-1 -outline-offset-1 outline-dotted outline-[#f5db95]' : ''}>
                      {row.map((cell, c) => (
                        <td key={c} className="h-[13px] whitespace-pre p-0 pt-px pl-[2px] leading-[12px]">{cell}</td>
                      ))}
                    </tr>
                  ))}
                </tbody>
              </table>
            </div>
          </div>
          <div className="mt-[15px] flex gap-[11px]">
            <PushButton label="Download" />
            <PushButton label="Upload" />
            <div className="flex-1"></div>
            <PushButton label="Alle wählen" />
          </div>
        </div>
      </div>
    </div>
  );
}

/* ---------- Message log ---------- */

const messages = [
  "'Drive 2 (AX5206-0000-0010)' (1002): state change aborted (requested 'SAFEOP', back to 'PREOP').",
  "'Drive 2 (AX5206-0000-0010)' (1002): 'PREOP to SAFEOP' failed! Error: 'check device state for SAFEOP'. AL Status '0x0012' read and '0x00",
  "'Drive 1 (AX5206-0000-0010)' (1001): state change aborted (requested 'SAFEOP', back to 'PREOP').",
  "'Drive 1 (AX5206-0000-0010)' (1001): 'PREOP to SAFEOP' failed! Error: 'check device state for SAFEOP'. AL Status '0x0012' read and '0x00",
];

function StopIcon() {
  return (
    <Svg w={13} h={13}>
      <path d="M4 0h5l4 4v5l-4 4H4L0 9V4z" fill="#600000" />
      <path d="M4 1h5l3 3v5l-3 3H4L1 9V4z" fill="#d00000" />
      <path d="M2 5h2v1H2zM3 7h1v1H2V7h1zM5 5h1v3H5zM7 5h1v3H7zM9 5h2v2h-1v1H9z" fill="#f09090" />
    </Svg>
  );
}

function ArrowButton({ label, d }: { label: string; d: string }) {
  return (
    <button aria-label={label} className={`h-4 w-4 shrink-0 ${raised}`}>
      <Svg><path d={d} fill="#000" /></Svg>
    </button>
  );
}

function MessageLog() {
  return (
    <section className={`h-24 shrink-0 font-[Roboto,Tahoma,sans-serif] ${sunkenOuter}`}>
      <div className={`flex h-full flex-col bg-white ${sunkenInner}`}>
        <div className="flex min-h-0 flex-1">
          <div className="min-w-0 flex-1 overflow-hidden">
            <table className="w-full table-fixed border-collapse">
              <colgroup>
                <col className="w-[99px]" />
                <col className="w-[160px]" />
                <col />
              </colgroup>
              <thead>
                <tr>
                  {['Server (Port)', 'Timestamp', 'Meldung'].map((title) => (
                    <th key={title} className={`h-4 p-0 pl-[6px] text-left font-['DejaVu_Sans_Condensed',Tahoma,sans-serif] font-normal leading-4 ${raised}`}>{title}</th>
                  ))}
                </tr>
              </thead>
              <tbody>
                {messages.map((message, i) => (
                  <tr key={i}>
                    <td className="h-[17px] p-0 pl-1 leading-[17px]">
                      <div className="flex items-center gap-[6px]">
                        <StopIcon />
                        (65535)
                      </div>
                    </td>
                    <td className="p-0 pl-[6px] leading-[17px]">08.05.2009 13:48:00 98 ms</td>
                    <td className="overflow-hidden p-0 pl-[6px] leading-[17px] whitespace-nowrap">{message}</td>
                  </tr>
                ))}
              </tbody>
            </table>
          </div>
          <div className={`flex w-4 flex-col ${checker}`}>
            <ArrowButton label="Nach oben" d="M8 5h1v1h1v1h1v1h1v1H5V8h1V7h1V6h1z" />
            <div className={`h-4 ${raised}`}></div>
            <div className="flex-1"></div>
            <ArrowButton label="Nach unten" d="M5 6h7v1h-1v1h-1v1H9v1H8V9H7V8H6V7H5z" />
          </div>
        </div>
        <div className="flex h-4 shrink-0 bg-[#d4d0c8]">
          <div className={`flex flex-1 ${checker}`}>
            <ArrowButton label="Nach links" d="M9 4v7H8v-1H7V9H6V8H5V7h1V6h1V5h1V4z" />
            <div className={`w-[66%] ${raised}`}></div>
            <div className="flex-1"></div>
            <ArrowButton label="Nach rechts" d="M6 4h1v1h1v1h1v1h1v1H9v1H8v1H7v1H6z" />
          </div>
          <div className="w-4"></div>
        </div>
      </div>
    </section>
  );
}

function StatusBar() {
  return (
    <footer className="flex h-[18px] shrink-0 items-end">
      <p className="h-4 flex-1 pl-px leading-4">Bereit</p>
      <p className="h-4 w-[138px] border border-[#808080] border-r-white border-b-white pl-[3px] leading-[14px] whitespace-nowrap">Lokal (10.27.194.245.1.1)</p>
      <p className="ml-[2px] h-4 w-[75px] bg-[#008040] text-center leading-4 text-white">Echtzeit 1%</p>
      <div className="ml-[4px]">
        <Svg w={14} h={14}>
          <path d="M1 14L14 1M5 14l9-9M9 14l5-5" stroke="#808080" strokeWidth="2" />
          <path d="M0 14L14 0M4 14L14 4M8 14l6-6" stroke="#fff" />
        </Svg>
      </div>
    </footer>
  );
}

export default function App() {
  return (
    <div className="flex h-screen flex-col overflow-hidden bg-[#d4d0c8] p-1 font-['DejaVu_Sans_Condensed',Tahoma,sans-serif] text-[11px] leading-[14px] text-black shadow-[inset_1px_1px_#d4d0c8,inset_-1px_-1px_#404040,inset_2px_2px_#fff,inset_-2px_-2px_#808080]">
      <TitleBar />

      <nav className="flex h-5 shrink-0 items-center gap-[11px] pt-[2px] pl-[5px]">
        {menus.map((menu) => (
          <button key={menu.label}>
            <Hot text={menu.label} at={menu.hot} />
          </button>
        ))}
      </nav>

      <Toolbar />

      <main className="flex min-h-0 flex-1 gap-1">
        <aside className={`w-[324px] shrink-0 ${sunkenOuter}`}>
          <div className={`h-full overflow-hidden bg-white pl-[2px] ${sunkenInner}`}>
            <Branches nodes={tree} trail={[]} />
          </div>
        </aside>
        <section className={`min-w-0 flex-1 ${sunkenOuter}`}>
          <div className={`h-full overflow-hidden pt-[9px] pl-[5px] ${sunkenInner}`}>
            <ParameterPage />
          </div>
        </section>
      </main>

      <div className="h-1 shrink-0"></div>
      <MessageLog />
      <StatusBar />
    </div>
  );
}
